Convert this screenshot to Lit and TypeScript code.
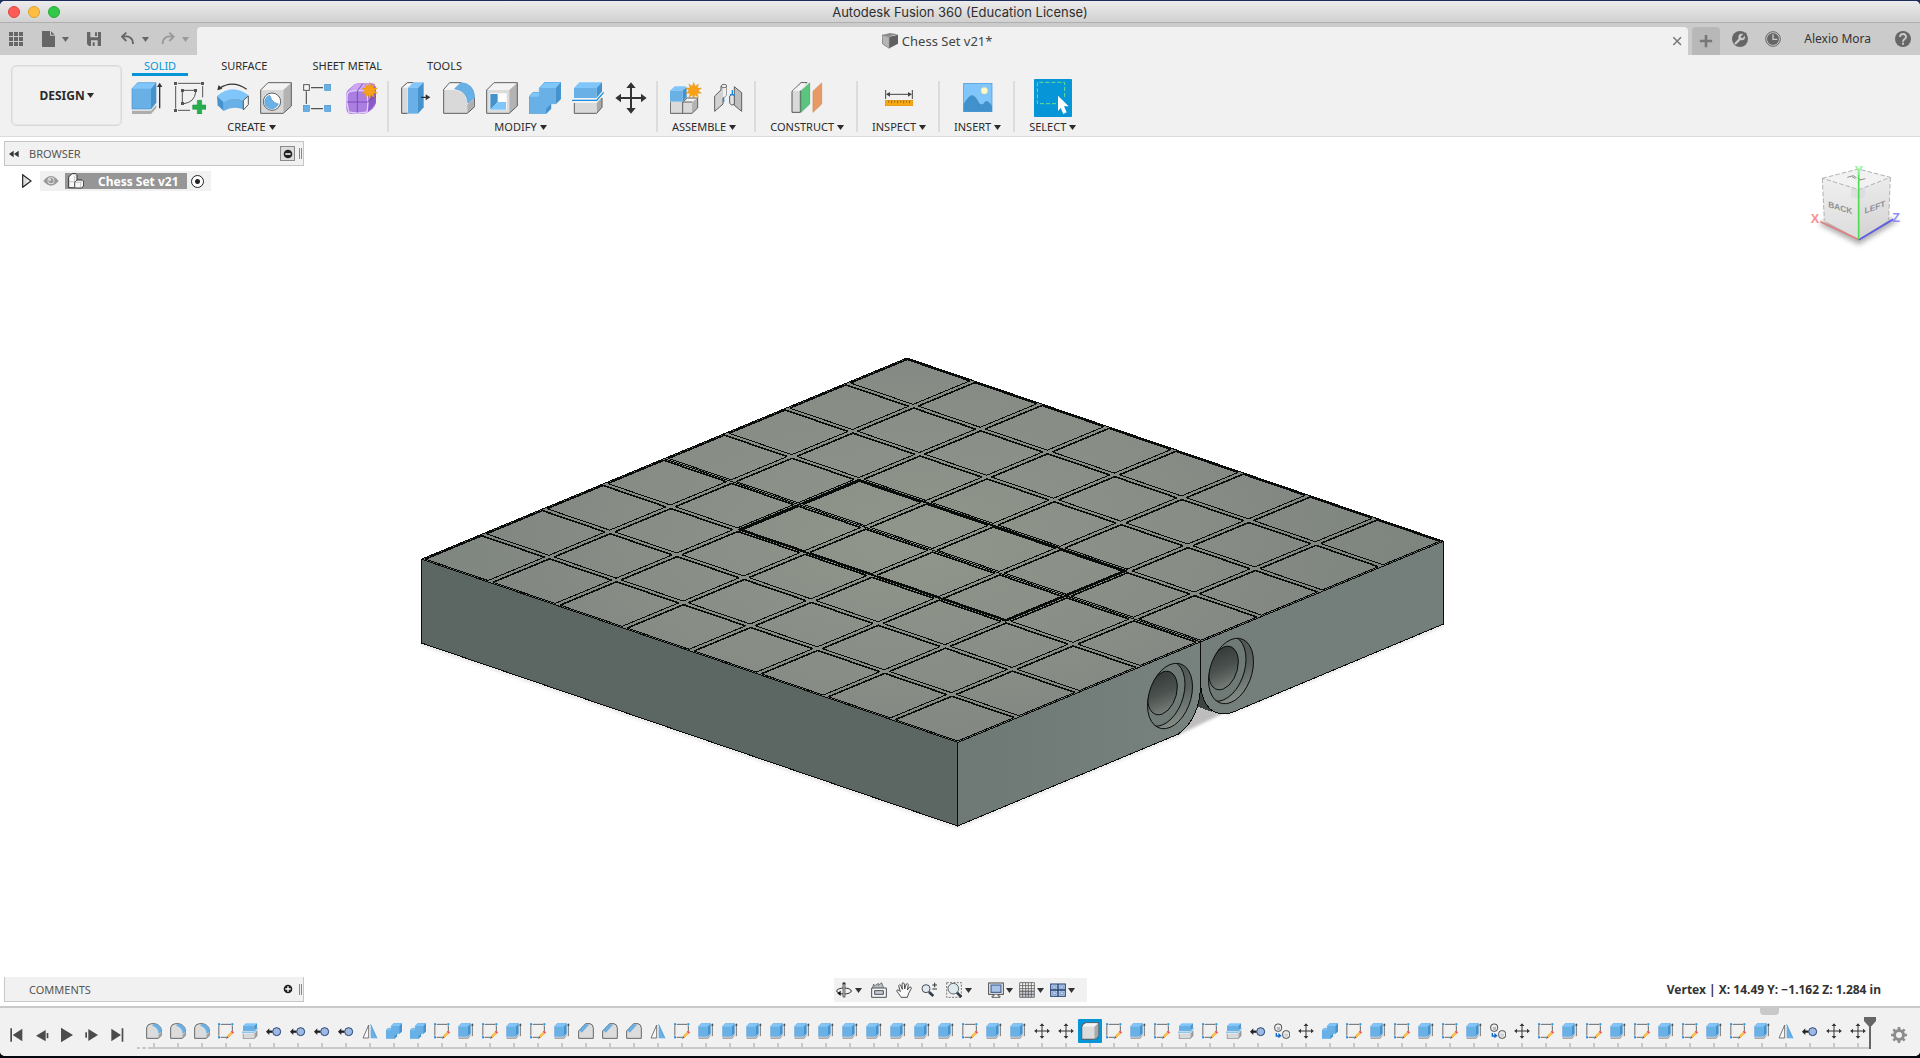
import { LitElement, html, svg, css, SVGTemplateResult } from "lit";
import { customElement, property, state } from "lit/decorators.js";
import { classMap } from "lit/directives/class-map.js";

const STAR = (cx: number, cy: number, r: number) => {
  const pts: string[] = [];
  for (let i = 0; i < 20; i++) {
    const rad = i % 2 ? r * 0.55 : r;
    const a = (i * Math.PI) / 10 - Math.PI / 2;
    pts.push(`${(cx + rad * Math.cos(a)).toFixed(1)},${(cy + rad * Math.sin(a)).toFixed(1)}`);
  }
  return svg`<polygon points=${pts.join(" ")} fill="#f7a11a" stroke="#e8920c" stroke-width="1"/>`;
};

/* Every glyph is drawn on a square grid; the first entry is the grid's side. */
const ICONS: Record<string, [number, SVGTemplateResult]> = {
  extrude: [96, svg`
    <polygon points="3,86 60,86 76,68 76,78 60,96 3,96" fill="#adadad"/>
    <polygon points="3,21 20,2 75,2 60,21" fill="#80c6fb"/>
    <rect x="3" y="20" width="57" height="61" fill="#68b0e6"/>
    <polygon points="60,20 75,2 75,62 60,81" fill="#4592cc"/>
    <path d="M3,20L20,2H75V62L60,81H3Z" fill="none" stroke="#4592cc" stroke-width="2"/>
    <path d="M86,12V79" stroke="#333" stroke-width="4"/><polygon points="78,15 94,15 86,2" fill="#333"/>`],
  sketchNew: [96, svg`
    <path d="M12,4H80M5,12V80M86,12V46M12,85H48" stroke="#555" stroke-width="3" fill="none"/>
    <path d="M0,0h9v9h-9zM81,0h9v9h-9zM0,81h9v9h-9zM21,21h9v9h-9zM60,21h9v9h-9zM21,60h9v9h-9z" fill="#555"/>
    <path d="M30,25H60M25,30V60M65,30Q62,60 30,65" stroke="#555" stroke-width="3" fill="none"/>
    <path d="M70,55h13v14h13v13h-13v14h-13v-14h-14v-13h14z" fill="#23b04c" stroke="#178a3a" stroke-width="1.5"/>`],
  revolve: [96, svg`
    <path d="M6,20Q46,-8 89,22" fill="none" stroke="#333" stroke-width="3.5"/><polygon points="1,25 5,9 16,20" fill="#333"/>
    <path d="M0,42Q46,2 95,40L79,55Q48,40 20,60Z" fill="#80c6fb"/>
    <path d="M20,60Q48,40 79,55V82Q48,70 20,87Z" fill="#68b0e6"/>
    <polygon points="0,42 20,60 20,87 2,70" fill="#4592cc"/>
    <polygon points="79,55 94,42 94,68 79,84" fill="#f4f4f4" stroke="#555" stroke-width="3"/>`],
  hole: [96, svg`
    <polygon points="2,24 24,2 94,2 70,24" fill="#f3f3f3"/><rect x="2" y="24" width="68" height="70" fill="#d8d8d8"/>
    <polygon points="70,24 94,2 94,72 70,94" fill="#b3b3b3"/>
    <path d="M2,24L24,2H94V72L70,94H2Z" fill="none" stroke="#5f5f5f" stroke-width="3"/>
    <circle cx="36" cy="59" r="26" fill="#fff" stroke="#5f5f5f" stroke-width="3"/>
    <path d="M27,39Q34,45 34,52Q42,64 56,66A22,22 0 1 1 27,39Z" fill="#68b0e6"/>
    <path d="M27,39Q34,45 34,52Q42,64 56,66" fill="none" stroke="#4592cc" stroke-width="2"/>`],
  pattern: [96, svg`
    <path d="M24,17H60M10,28V66M24,80H60" stroke="#555" stroke-width="3.5"/>
    <rect x="2" y="8" width="17" height="17" fill="#f8f8f8" stroke="#555" stroke-width="3"/>
    <g fill="#68b0e6" stroke="#4592cc" stroke-width="2"><rect x="65" y="7" width="18" height="18"/><rect x="1" y="70" width="18" height="18"/><rect x="65" y="70" width="18" height="18"/></g>`],
  form: [96, svg`
    <path d="M1,34Q2,26 10,20L24,8Q32,3 45,4H80Q91,8 90,30V64Q88,72 80,80L68,90Q60,96 45,96H14Q2,94 1,80Z" fill="#a97be0"/>
    <path d="M3,32Q10,24 24,9Q32,4 50,5H78Q74,16 62,26Q40,22 3,32Z" fill="#cda6f7"/>
    <path d="M64,30Q76,22 88,12Q92,40 89,62Q80,78 66,88Q70,60 64,30Z" fill="#8a5bc7"/>
    <path d="M4,36Q6,27 34,26T63,32Q68,60 63,90Q34,96 8,90Q1,60 4,36Z" fill="#ab7ee2" stroke="#e2cdfa" stroke-width="4"/>
    <path d="M34,27V92M3,60H65L90,42M34,27L50,5" stroke="#7440ab" stroke-width="2.5" fill="none"/>
    ${STAR(71, 26, 25)}`],
  pressPull: [96, svg`
    <path d="M5,17L22,2H40L24,17Z" fill="#f6f6f6"/><path d="M5,17H23V94H5Z" fill="#d9d9d9"/>
    <path d="M40,2H22L5,17V94H23" fill="none" stroke="#555" stroke-width="3"/>
    <polygon points="24,17 41,1 71,1 53,17" fill="#80c6fb"/><rect x="24" y="17" width="30" height="78" fill="#68b0e6"/>
    <polygon points="54,17 71,1 71,76 54,95" fill="#4592cc"/>
    <path d="M63,46H82" stroke="#333" stroke-width="4"/><polygon points="77,37 91,46 77,55" fill="#333"/>`],
  fillet: [96, svg`
    <path d="M2,23L20,2H54L36,20Z" fill="#f6f6f6"/>
    <path d="M2,24H34Q70,28 73,68V94H2Z" fill="#d9d9d9"/><polygon points="73,68 95,48 95,74 73,94" fill="#b0b0b0"/>
    <path d="M54,2H20L2,22V94H73L95,74V48" fill="none" stroke="#5f5f5f" stroke-width="3"/>
    <path d="M35,20L54,2Q92,4 95,46L75,64Q72,26 35,20Z" fill="#68b0e6" stroke="#4a9ad6" stroke-width="2"/>`],
  shell: [96, svg`
    <polygon points="2,24 24,2 94,2 70,24" fill="#f3f3f3"/><rect x="2" y="24" width="68" height="70" fill="#dcdcdc"/>
    <polygon points="70,24 94,2 94,72 70,94" fill="#b3b3b3"/>
    <path d="M2,24L24,2H94V72L70,94H2Z" fill="none" stroke="#5f5f5f" stroke-width="3"/>
    <rect x="11" y="34" width="51" height="50" fill="#fff"/>
    <polygon points="13,36 35,36 35,60 13,83" fill="#4592cc"/><polygon points="35,60 60,60 60,83 13,83" fill="#80c6fb"/>`],
  combine: [96, svg`
    <path d="M0,44L12,31H31V18L47,1H96V50L81,65H66V80L51,95H0Z" fill="#68b0e6"/>
    <path d="M31,18L47,1H96L81,18ZM0,44L12,31H31V40L27,44Z" fill="#80c6fb"/>
    <path d="M81,18L96,1V50L81,65ZM51,80L66,65V80L51,95Z" fill="#4592cc"/>
    <path d="M0,44L12,31H31V18L47,1H96V50L81,65H66V80L51,95H0Z" fill="none" stroke="#4f9ed8" stroke-width="1.5"/>`],
  split: [96, svg`
    <polygon points="6,18 22,1 90,1 76,18" fill="#80c6fb"/><rect x="6" y="18" width="68" height="30" fill="#68b0e6"/>
    <polygon points="74,18 90,1 90,28 74,48" fill="#4592cc"/>
    <path d="M0,55H74L95,31" fill="none" stroke="#1590e6" stroke-width="4"/>
    <rect x="7" y="63" width="66" height="31" fill="#d9d9d9"/><polygon points="74,63 90,46 90,76 74,94" fill="#a8a8a8"/>
    <path d="M7,63V94H74L90,76V48" fill="none" stroke="#5f5f5f" stroke-width="3"/>`],
  move: [96, svg`<path d="M45,16H51V45H78V35L95,48L78,61V51H51V78H62L48,95L34,78H45V51H18V61L1,48L18,35V45H45V18H34L48,1L62,18H45Z" fill="#333"/>`],
  component: [96, svg`
    <path d="M1,60H38V94H1ZM38,60H66V94H38Z" fill="#dadada"/><path d="M38,60L52,48H82L66,60Z" fill="#f5f5f5"/><path d="M66,60L83,48V78L66,94Z" fill="#b3b3b3"/>
    <path d="M1,60V94H66L83,78V48H52L38,60V94M38,60H66" fill="none" stroke="#5f5f5f" stroke-width="3"/>
    <polygon points="0,26 14,13 48,13 40,26" fill="#80c6fb"/><rect x="0" y="26" width="38" height="33" fill="#68b0e6"/><polygon points="38,26 50,14 50,46 38,59" fill="#4592cc"/>
    ${STAR(71, 26, 25)}`],
  joint: [96, svg`
    <path d="M5,42L24,24V12Q30,4 40,10V40L30,48V66L5,88Z" fill="#d2d2d2" stroke="#5f5f5f" stroke-width="3"/>
    <path d="M30,48V14Q34,8 40,10V40Z" fill="#efefef"/><ellipse cx="33" cy="12" rx="8" ry="5" fill="#f5f5f5" stroke="#5f5f5f" stroke-width="2.5"/>
    <path d="M64,14L86,32V88L64,70Z" fill="#bebebe" stroke="#5f5f5f" stroke-width="3"/>
    <path d="M50,42Q56,34 64,40V66Q56,74 50,64Z" fill="#e4e4e4" stroke="#5f5f5f" stroke-width="3"/>
    <path d="M32,46V60M58,24V38M51,38H66" stroke="#1590e6" stroke-width="4"/>`],
  construct: [96, svg`
    <path d="M3,28L30,2H48L28,24V91H3Z" fill="#d9d9d9" stroke="#555" stroke-width="3"/><path d="M5,27L31,4H48L28,26Z" fill="#f5f5f5"/>
    <polygon points="30,28 56,3 56,66 30,91" fill="#5bc57f" stroke="#3da562" stroke-width="2"/>
    <polygon points="66,28 92,3 92,66 66,91" fill="#e79a66" stroke="#d8834a" stroke-width="2"/>`],
  inspect: [96, svg`
    <path d="M8,24V51M88,24V51M14,37H82" stroke="#444" stroke-width="3"/><path d="M9,37L21,30V44ZM87,37L75,30V44Z" fill="#444"/>
    <rect x="7" y="55" width="82" height="16" fill="#f9a90f" stroke="#e38f04" stroke-width="2"/>
    <path d="M17,56v6M26,56v8M35,56v6M44,56v8M53,56v6M62,56v8M71,56v6M80,56v8" stroke="#6b4a00" stroke-width="2"/>`],
  insert: [96, svg`
    <rect x="5" y="4" width="85" height="85" fill="#80c6fb" stroke="#3f93d2" stroke-width="2"/>
    <path d="M5,66Q20,40 30,40T52,64Q62,72 68,60Q76,50 90,72V89H5Z" fill="#4191cc"/><circle cx="67" cy="26" r="10" fill="#fdf8c6" stroke="#d6d78a"/>`],
  select: [114, svg`
    <rect width="114" height="114" rx="2" fill="#0696d7"/>
    <path d="M92,54V10H10V74H70" fill="none" stroke="#6fdc8c" stroke-width="3" stroke-dasharray="12 6"/>
    <path d="M72,50L104,82H90L98,100L88,105L80,87L72,96Z" fill="#fff"/>`],
  sketch: [48, svg`
    <path d="M8,4H39M2.5,8V38M43,8V24M8,43H24" stroke="#555" stroke-width="2.6" fill="none"/>
    <path d="M0,1h6v6h-6zM40,1h6v6h-6zM0,40h6v6h-6z" fill="#1590e6"/>
    <path d="M24,47L27,38L32,44Z" fill="#555"/><path d="M27,38L39,26L45,32L32,44Z" fill="#f8bc4c"/><path d="M38,26L42,23L48,28L45,32Z" fill="#f04856"/>`],
  filletSmall: [48, svg`
    <path d="M2,46V14Q4,3 16,2H26Q45,5 47,26V36L37,46Z" fill="#dcdcdc" stroke="#666" stroke-width="3"/>
    <path d="M37,46V36L47,26V36Z" fill="#a5a5a5"/><path d="M18,8L24,2Q45,4 47,26L38,32Q36,12 18,8Z" fill="#68b0e6"/>`],
  chamfer: [48, svg`
    <path d="M2,46V24L23,2H36Q46,4 46,16V46Z" fill="#dcdcdc" stroke="#666" stroke-width="3"/>
    <polygon points="4,22 20,5 32,5 12,28" fill="#68b0e6" stroke="#4592cc"/>`],
  jointOrigin: [48, svg`
    <path d="M8,26H20" stroke="#222" stroke-width="7"/><polygon points="0,26 10,16 10,36" fill="#222"/>
    <circle cx="32" cy="26" r="12" fill="#9db8e2" stroke="#2c4574" stroke-width="3"/>`],
  mirror: [48, svg`<polygon points="3,45 20,6 20,45" fill="#f6f6f6" stroke="#666" stroke-width="2.6"/><polygon points="26,4 45,46 26,46" fill="#68b0e6"/><path d="M26,4L45,46" stroke="#4592cc" stroke-width="2"/>`],
  copy: [48, svg`
    <rect x="2" y="3" width="21" height="22" rx="9" fill="#ececec" stroke="#333" stroke-width="2.6"/><rect x="9" y="12" width="9" height="9" fill="#bbb"/>
    <rect x="26" y="23" width="21" height="23" rx="9" fill="#ececec" stroke="#333" stroke-width="2.6"/><rect x="32" y="32" width="9" height="9" fill="#ccc"/>
    <path d="M7,30V39H14" fill="none" stroke="#0c66c9" stroke-width="4"/><polygon points="13,30 23,38 13,46" fill="#0c66c9"/>`],
  body: [48, svg`<path d="M2,14Q3,3 14,2H46V36Q44,46 34,46H2Z" fill="#dcdcdc" stroke="#555" stroke-width="2.6"/><path d="M36,12L46,3V36L36,46Z" fill="#a9a9a9"/><path d="M4,12L13,3H45L36,12Z" fill="#f5f5f5"/>`],
  grid: [48, svg`<path d="M3,3h12v12h-12zM18,3h12v12h-12zM33,3h12v12h-12zM3,18h12v12h-12zM18,18h12v12h-12zM33,18h12v12h-12zM3,33h12v12h-12zM18,33h12v12h-12zM33,33h12v12h-12z" fill="#666"/>`],
  file: [48, svg`<path d="M0,0H24V14H39V48H0Z" fill="#666"/><path d="M27,1L38,11H27Z" fill="#666"/>`],
  save: [48, svg`<path d="M0,3H42V45H6L0,39Z" fill="#666"/><path d="M10,3H33V19H10ZM12,28H32V45H12Z" fill="#cbcbcb"/><path d="M24,4h6v11h-6zM17,34h6v11h-6z" fill="#666"/>`],
  undo: [48, svg`<path d="M16,5L3,17L16,30M5,17Q36,12 36,39" fill="none" stroke="#666" stroke-width="5.5"/>`],
  redo: [48, svg`<path d="M25,5L38,17L25,30M36,17Q5,12 5,39" fill="none" stroke="#999" stroke-width="5.5"/>`],
  document: [48, svg`<path d="M0,6L24,0L48,4L22,10Z" fill="#8a8a8a"/><path d="M0,6L22,11V46L2,33Z" fill="#b5b5b5" stroke="#6a6a6a" stroke-width="2"/><path d="M22,11L48,5V32L22,46Z" fill="#606060"/>`],
  close: [48, svg`<path d="M13,13L36,36M36,13L13,36" stroke="#777" stroke-width="4.5"/>`],
  plus: [48, svg`<path d="M24,3V45M3,24H45" stroke="#777" stroke-width="9"/>`],
  extensions: [48, svg`<circle cx="24" cy="24" r="24" fill="#666"/><path d="M9,39L25,23" stroke="#cbcbcb" stroke-width="7"/><circle cx="29" cy="18" r="10" fill="#cbcbcb"/><path d="M28,20L42,6" stroke="#666" stroke-width="7"/>`],
  jobs: [48, svg`<circle cx="24" cy="24" r="22" fill="#cbcbcb" stroke="#666" stroke-width="3"/><circle cx="24" cy="24" r="18" fill="#666"/><path d="M24,10V25H37" fill="none" stroke="#cbcbcb" stroke-width="4"/>`],
  help: [48, svg`<circle cx="24" cy="24" r="24" fill="#666"/><path d="M15,18Q15,9 24,9T33,18Q33,22 28,25Q24,28 24,32" fill="none" stroke="#cbcbcb" stroke-width="5.5"/><rect x="21" y="35" width="6" height="6" fill="#cbcbcb"/>`],
  collapse: [30, svg`<path d="M0,15L14,5V25ZM15,15L29,5V25Z" fill="#333"/>`],
  minus: [30, svg`<circle cx="15" cy="15" r="13" fill="#222"/><path d="M7,15H23" stroke="#fff" stroke-width="4"/>`],
  add: [30, svg`<circle cx="15" cy="15" r="13" fill="#222"/><path d="M7,15H23M15,7V23" stroke="#fff" stroke-width="4"/>`],
  expand: [42, svg`<path d="M8,2L33,21L8,40Z" fill="#f2f2f2"/><path d="M8,2L20,11V31L8,40Z" fill="#dcdcdc"/><path d="M8,2L33,21L8,40Z" fill="none" stroke="#222" stroke-width="3.5"/>`],
  eye: [48, svg`<path d="M1,24Q24,-6 47,24Q24,52 1,24Z" fill="#9b9b9b"/><circle cx="24" cy="23" r="10" fill="#f1f1f1"/><circle cx="24" cy="23" r="8" fill="#9b9b9b"/><circle cx="21" cy="20" r="3" fill="#f1f1f1"/>`],
  assembly: [48, svg`<path d="M2,44V12L12,2H24L27,6V21H42L47,25V39L40,45Z" fill="#f8f8f8" stroke="#333" stroke-width="3"/><path d="M20,10V44H38V28H20M38,28L45,22M3,26H20M20,10L27,4" fill="none" stroke="#aaa" stroke-width="2"/><path d="M20,44V28L27,21" fill="none" stroke="#333" stroke-width="2.5"/>`],
  first: [48, svg`<path d="M4,4h5v40h-5zM11,24L40,5V43Z" fill="#4c4c4c"/>`],
  stepBack: [48, svg`<path d="M6,26L35,9V43ZM38,18h5v16h-5z" fill="#4c4c4c"/>`],
  play: [48, svg`<path d="M6,2L42,24L6,46Z" fill="#4c4c4c"/>`],
  stepForward: [48, svg`<path d="M42,24L13,6V42ZM4,16h5v16h-5z" fill="#4c4c4c"/>`],
  last: [48, svg`<path d="M38,4h5v40h-5zM36,24L7,5V43Z" fill="#4c4c4c"/>`],
  orbit: [48, svg`<ellipse cx="24" cy="27" rx="22" ry="9" fill="none" stroke="#333" stroke-width="3"/><path d="M24,2V46" stroke="#333" stroke-width="8"/><path d="M24,4V44" stroke="#f1f1f1" stroke-width="3"/><path d="M18,7L24,0L30,7Z" fill="#333"/><path d="M4,34L14,26V42Z" fill="#111"/>`],
  lookAt: [48, svg`<path d="M4,18L8,6L10,12L22,4V10L32,2L38,18" fill="#b9bdc4" stroke="#4b4f57" stroke-width="2"/><path d="M2,18H46V46H2Z" fill="#f4f4f4" stroke="#4b4f57" stroke-width="3"/><path d="M11,26H37V37H11Z" fill="#c7cbd3" stroke="#4b4f57" stroke-width="3"/>`],
  hand: [48, svg`<path d="M14,44Q8,34 2,27Q3,21 9,25L13,29L8,11Q10,6 14,10L19,22L18,5Q21,0 25,5L26,21L31,6Q35,3 37,8L34,24L41,15Q46,14 46,19L37,36Q36,42 34,46H15Z" fill="#fbfbfb" stroke="#444" stroke-width="2.8"/>`],
  zoom: [48, svg`<circle cx="15" cy="20" r="12" fill="#dfe9ef" stroke="#4b5056" stroke-width="3"/><path d="M24,30L37,42" stroke="#333b48" stroke-width="8"/><path d="M34,9H48M41,2V16M34,21H48" stroke="#333" stroke-width="3"/>`],
  zoomWindow: [48, svg`<path d="M2,2H46V46H2Z" fill="none" stroke="#777" stroke-width="3" stroke-dasharray="6 4"/><circle cx="22" cy="20" r="16" fill="#dde9ea" stroke="#566" stroke-width="3"/><path d="M33,32L46,45" stroke="#333b48" stroke-width="8"/>`],
  display: [48, svg`<rect x="2" y="3" width="44" height="34" fill="#f4f4f4" stroke="#444" stroke-width="3"/><rect x="9" y="9" width="30" height="22" fill="#a9c2e8" stroke="#2e5088" stroke-width="3"/><path d="M18,38V42H12V46H36V42H30V38" fill="#fff" stroke="#444" stroke-width="2.5"/>`],
  gridSnap: [48, svg`<rect x="2" y="2" width="44" height="44" fill="#f8f8f8"/><path d="M2,24H46V46H2Z" fill="#c9cdd6"/><path d="M2,2H46V46H2ZM11,2V46M20,2V46M28,2V46M37,2V46M2,11H46M2,20H46M2,28H46M2,37H46" fill="none" stroke="#555" stroke-width="2.4"/>`],
  viewports: [48, svg`<rect x="2" y="6" width="44" height="37" fill="#b7cbeb" stroke="#24406e" stroke-width="3"/><path d="M24,6V43M2,24H46" stroke="#24406e" stroke-width="4"/><path d="M8,12h10v7h-10zM30,12h10v7h-10zM8,30h10v7h-10zM30,30h10v7h-10z" fill="#d4e1f5" stroke="#5f82b8" stroke-width="2"/>`],
  marker: [36, svg`<path d="M0,0H36V12L22,28H14L0,12Z" fill="#666"/>`],
  gear: [48, svg`<g fill="#8c8c8c"><path d="M20,0h8v48h-8zM0,20h48v8h-48z"/><path d="M20,0h8v48h-8zM0,20h48v8h-48z" transform="rotate(45 24 24)"/><circle cx="24" cy="24" r="18"/></g><circle cx="24" cy="24" r="9" fill="#f1f1f1"/>`],
};

const icon = (name: string, size = 16) => {
  const [box, art] = ICONS[name];
  return html`<svg width=${size} height=${size} viewBox="0 0 ${box} ${box}" aria-hidden="true">${art}</svg>`;
};
const caret = html`<svg class="caret" width="7" height="5" viewBox="0 0 7 5" aria-hidden="true"><path d="M0,0H7L3.5,5Z" fill="currentColor"/></svg>`;

const shared = css`
  button, select {
    font: inherit; color: inherit; background: none; border: 0; padding: 0; margin: 0;
    display: flex; align-items: center; cursor: pointer;
  }
  svg { display: block; flex: none; }
`;

/* Board corners and the two cell steps of the orthographic view. */
const TOP = [907, 358];
const U = [67.06, 22.9];
const V = [-60.69, 25.15];
const at = (u: number, v: number) =>
  `${(TOP[0] + u * U[0] + v * V[0]).toFixed(2)},${(TOP[1] + u * U[1] + v * V[1]).toFixed(2)}`;

@customElement("board-scene")
class BoardScene extends LitElement {
  static styles = css`
    :host { display: block; }
    svg { display: block; width: 100%; height: 100%; }
    .ink { fill: none; stroke: #0b0d0c; stroke-width: 1; shape-rendering: crispEdges; }
    .wall { stroke-width: 1.6; }
    .face { shape-rendering: crispEdges; }
    .round { fill: none; stroke: #0b0d0c; stroke-width: 1; vector-effect: non-scaling-stroke; }
  `;

  private cells() {
    const out: SVGTemplateResult[] = [];
    for (let i = 0; i < 8; i++) {
      for (let j = 0; j < 8; j++) {
        const a = i === 0 ? 0.03 : 0.04, b = i === 7 ? 0.97 : 0.965;
        const c = j === 0 ? 0.03 : 0.04, d = j === 7 ? 0.97 : 0.965;
        const p = [at(i + a, j + c), at(i + b, j + c), at(i + b, j + d), at(i + a, j + d)];
        out.push(svg`<path class="ink" d="M${p[1]}L${p[2]}L${p[3]}"/><path class="ink wall" d="M${p[3]}L${p[0]}L${p[1]}"/>`);
      }
    }
    return out;
  }

  private seams() {
    const line = (u1: number, v1: number, u2: number, v2: number) => svg`<path class="ink" d="M${at(u1, v1)}L${at(u2, v2)}"/>`;
    return [
      line(0, 4, 8, 4),
      line(2, 3, 6, 3), line(2, 3.02, 6, 3.02),
      line(2, 5, 6, 5), line(2, 4.98, 6, 4.98),
      line(2, 3, 2, 5), line(2.015, 3, 2.015, 5),
      line(6, 3, 6, 5), line(5.985, 3, 5.985, 5),
    ];
  }

  private bore(id: string, cx: number, cy: number) {
    const rim = `matrix(22.5 -9.3 0 31.4 ${cx} ${cy})`;
    const floor = `matrix(22.5 -9.3 0 31.4 ${cx - 7.5} ${cy - 2.5})`;
    const inner = `matrix(14.8 -6.1 0 20.9 ${cx - 7.5} ${cy - 3})`;
    return svg`
      <clipPath id=${id}><circle r="1" transform=${rim} /></clipPath>
      <circle r="1" transform=${rim} fill="url(#rimShade)"/>
      <g clip-path="url(#${id})">
        <circle r="1" transform=${floor} fill="#6f7a76"/>
        <circle class="round" r="1" transform=${floor} />
        <circle r="1" transform=${inner} fill="url(#boreShade)"/>
        <circle class="round" r="1" transform=${inner} />
      </g>
      <circle class="round" r="1" transform=${rim} />`;
  }

  render() {
    return html`<svg viewBox="0 137 1920 869" role="img" aria-label="Chess board model">
      <defs>
        <radialGradient id="topShade" gradientUnits="userSpaceOnUse" cx="910" cy="540" r="540" gradientTransform="translate(0 270) scale(1 .5)">
          <stop offset="0" stop-color="#90968b"/><stop offset=".5" stop-color="#888d86"/><stop offset="1" stop-color="#7c847d"/>
        </radialGradient>
        <linearGradient id="rightShade"><stop offset="0" stop-color="#6e7875"/><stop offset="1" stop-color="#77817d"/></linearGradient>
        <linearGradient id="rimShade" x1="0" y1="0" x2="0" y2="1"><stop offset="0" stop-color="#4e5553"/><stop offset=".5" stop-color="#5a625f"/><stop offset="1" stop-color="#858c86"/></linearGradient>
        <linearGradient id="boreShade" x1="0" y1="0" x2="0" y2="1"><stop offset="0" stop-color="#353b39"/><stop offset=".5" stop-color="#4a514e"/><stop offset="1" stop-color="#777e78"/></linearGradient>
        <filter id="soft" x="-20%" y="-20%" width="140%" height="140%"><feGaussianBlur stdDeviation="1.5"/></filter>
      </defs>
      <path d="M1190,704L1226,712L1172,738Z" fill="#bdbdbd" filter="url(#soft)"/>
      <path d="M421.5,644L957.5,827L1178,735M1226,715L1443.5,625" fill="none" stroke="#e2e2e2" stroke-width="3" filter="url(#soft)"/>
      <polygon class="face" points="1201,680 1196,706 1212,712" fill="#3d4341"/>
      <polygon class="face" points="421.5,559.5 957.5,742 957.5,826 421.5,643" fill="#5c6662"/>
      <path class="face" d="M957.5,742L1200.5,641V685Q1200,718 1178.5,734L957.5,826Z" fill="url(#rightShade)"/>
      <path class="face" d="M1200.5,641L1443.5,541V624L1238,710Q1222,718 1210,709Q1202,701 1200.5,685Z" fill="#747e7a"/>
      <polygon class="face" points="${at(0, 0)} ${at(8, 0)} ${at(8, 8)} ${at(0, 8)}" fill="url(#topShade)"/>
      <path class="ink" d="M421.5,559.5V643L957.5,826V742M957.5,826L1178.5,734Q1200,718 1200.5,685V641M1200.5,685Q1202,701 1210,709Q1222,718 1238,710L1443.5,624V541"/>
      <polygon class="ink" points="${at(0, 0)} ${at(8, 0)} ${at(8, 8)} ${at(0, 8)}"/>
      ${this.cells()}${this.seams()}
      ${this.bore("boreLeft", 1170, 696)}${this.bore("boreRight", 1231, 671)}
    </svg>`;
  }
}

@customElement("view-cube")
class ViewCube extends LitElement {
  static styles = css`
    :host { display: block; }
    svg { display: block; }
    .label { font: bold 25px "Liberation Sans", sans-serif; fill: #8d9094; text-anchor: middle; }
    .axis { font: bold 38px "Liberation Sans", sans-serif; text-anchor: middle; }
  `;
  render() {
    return html`<svg width="100" height="90" viewBox="501 480 300 270" role="img" aria-label="View cube">
      <defs>
        <linearGradient id="l" x2="0" y2="1"><stop offset="0" stop-color="#efefef"/><stop offset="1" stop-color="#dcdcdc"/></linearGradient>
        <linearGradient id="r" x2="0" y2="1"><stop offset="0" stop-color="#ececec"/><stop offset="1" stop-color="#d2d2d2"/></linearGradient>
        <filter id="b" x="-30%" y="-30%" width="160%" height="160%"><feGaussianBlur stdDeviation="8"/></filter>
      </defs>
      <path d="M535,672L657,734L775,664L700,640H600Z" fill="#8f8f8f" opacity=".7" filter="url(#b)"/>
      <polygon points="547,535 657,569 657,718 553,662" fill="url(#l)"/>
      <polygon points="657,569 751,532 746,660 657,718" fill="url(#r)"/>
      <polygon points="547,535 655,507 751,532 657,569" fill="#f2f2f2"/>
      <path d="M547,535L655,507L751,532L657,569ZM547,535L553,662M751,532L746,660" fill="none" stroke="#a5a5a5" stroke-width="2.5" stroke-dasharray="14 6"/>
      <path d="M633,562L657,569L675,561V590L657,598L633,590Z" fill="#d4d8dd" opacity=".6"/>
      <path d="M622,532L640,527L650,534M636,530L646,536M655,534L662,541M658,540L676,536" fill="none" stroke="#8d8f93" stroke-width="3"/>
      <text class="label" transform="translate(601 632) skewY(17)">BACK</text>
      <text class="label" transform="translate(705 630) skewY(-20)">LEFT</text>
      <path d="M541,665L657,719" stroke="#e08080" stroke-width="5"/>
      <path d="M657,719L760,658" stroke="#5b5be8" stroke-width="5"/>
      <path d="M656,516V718" stroke="#4fdc4f" stroke-width="5"/>
      <text class="axis" x="525" y="669" fill="#f98f8f">X</text>
      <text class="axis" x="656" y="525" fill="#8ff58f">Y</text>
      <text class="axis" x="768" y="665" fill="#8f8ff7">Z</text>
    </svg>`;
  }
}

interface Group { label: string; tools: [string, string][]; }
const GROUPS: Group[] = [
  { label: "CREATE", tools: [["extrude", "Extrude"], ["sketchNew", "Create Sketch"], ["revolve", "Revolve"], ["hole", "Hole"], ["pattern", "Rectangular Pattern"], ["form", "Create Form"]] },
  { label: "MODIFY", tools: [["pressPull", "Press Pull"], ["fillet", "Fillet"], ["shell", "Shell"], ["combine", "Combine"], ["split", "Split Body"], ["move", "Move"]] },
  { label: "ASSEMBLE", tools: [["component", "New Component"], ["joint", "Joint"]] },
  { label: "CONSTRUCT", tools: [["construct", "Offset Plane"]] },
  { label: "INSPECT", tools: [["inspect", "Measure"]] },
  { label: "INSERT", tools: [["insert", "Insert Image"]] },
  { label: "SELECT", tools: [["select", "Select"]] },
];

@customElement("tool-ribbon")
class ToolRibbon extends LitElement {
  @state() private tab = "SOLID";
  static styles = [shared, css`
    :host { display: flex; background: #f1f1f1; border-bottom: 1px solid #dcdcdc; padding-left: 11px; gap: 9px; color: #2b2b2b; font-size: 11px; }
    .workspace { display: flex; align-items: center; justify-content: center; gap: 1px; width: 111px; margin: 10px 0; box-sizing: border-box; border: 1px solid #d9d9d9; box-shadow: inset 0 0 0 1px #e6e6e6; border-radius: 5px; font-size: 12px; font-weight: 700; }
    .workspace select { appearance: none; outline: 0; }
    .tabs { display: flex; gap: 21px; padding: 4px 0 0 1px; }
    .tab { line-height: 14px; padding: 0 12px; border-bottom: 3px solid transparent; }
    .active { color: #0696d7; border-color: #0696d7; }
    .groups { display: flex; }
    .group { display: flex; flex-direction: column; align-items: center; padding: 3px 9px 1px 11px; }
    .group:first-child { padding-left: 0; }
    .divider { width: 2px; margin: 5px 0 4px; background: #dcdcdc; }
    .tools { display: flex; gap: 11px; height: 38px; align-items: center; }
    .menu { gap: 3px; line-height: 16px; margin-top: 2px; padding: 0 3px; }
    .several .menu { margin-right: 6px; }
  `];
  render() {
    return html`
      <label class="workspace"><select aria-label="Workspace"><option>DESIGN</option></select>${caret}</label>
      <div>
        <div class="tabs" role="tablist">
          ${["SOLID", "SURFACE", "SHEET METAL", "TOOLS"].map((t) => html`
            <button role="tab" aria-selected=${t === this.tab ? "true" : "false"} class=${classMap({ tab: true, active: t === this.tab })} @click=${() => (this.tab = t)}>${t}</button>`)}
        </div>
        <div class="groups">
          ${GROUPS.map((g, i) => html`
            ${i ? html`<div class="divider"></div>` : ""}
            <div class=${classMap({ group: true, several: g.tools.length > 1 })}>
              <div class="tools">${g.tools.map(([n, label]) => html`<button aria-label=${label}>${icon(n, n === "select" ? 38 : 32)}</button>`)}</div>
              <button class="menu">${g.label}${caret}</button>
            </div>`)}
        </div>
      </div>`;
  }
}

/* One letter per feature of the design history, oldest first. */
const CODES: Record<string, string> = { f: "filletSmall", s: "sketch", p: "split", j: "jointOrigin", m: "mirror", c: "combine", e: "extrude", h: "chamfer", v: "move", b: "body", y: "copy" };
const HISTORY = "fffspjjjjmccse" + "sesehhhms" + "e".repeat(11) + "seevvb" + "sespspjyvcsese" + "seyv" + "se".repeat(5) + "mjvv";

@customElement("history-bar")
class HistoryBar extends LitElement {
  @property() steps = "";
  @state() private selected = 39;
  static styles = [shared, css`
    :host { display: flex; position: relative; background: #f1f1f1; border-top: 2px solid #c9c9c9; padding: 11px 13px 7px 9px; }
    .playback { display: flex; gap: 9px; padding-top: 8px; align-items: flex-start; }
    .track { display: flex; list-style: none; margin: 0 0 0 12px; padding: 0 0 2px 5px; min-width: 0; overflow: hidden;
      background: linear-gradient(90deg, #c9c9c9 3px, transparent 3px 5px, #c9c9c9 5px 9px, transparent 9px 11px, #c9c9c9 11px) bottom / 100% 2px no-repeat; }
    .step { display: flex; flex-direction: column; align-items: center; flex: none; width: 24px; }
    .step::after { content: ""; width: 2px; height: 4px; background: #c9c9c9; }
    .step button { width: 24px; height: 24px; justify-content: center; border-radius: 1px; }
    .step .on { background: #0696d7; }
    .marker { flex: none; width: 12px; margin: -2px 0 0 -6px; display: flex; flex-direction: column; align-items: center; }
    .marker::after { content: ""; width: 2px; flex: 1; margin-top: -4px; background: #666; }
    .settings { margin-left: auto; padding-top: 8px; align-items: flex-start; }
    .thumb { position: absolute; top: 0; right: 141px; width: 19px; height: 7px; border-radius: 0 0 4px 4px; background: #c9c9c9; }
  `];
  render() {
    const controls: [string, string][] = [["first", "Go to start"], ["stepBack", "Step back"], ["play", "Play"], ["stepForward", "Step forward"], ["last", "Go to end"]];
    return html`
      <div class="playback">${controls.map(([n, l]) => html`<button aria-label=${l}>${icon(n)}</button>`)}</div>
      <ol class="track">
        ${[...this.steps].map((c, i) => html`<li class="step"><button class=${classMap({ on: i === this.selected })} aria-label="${CODES[c]} ${i + 1}" @click=${() => (this.selected = i)}>${icon(CODES[c], c === "b" ? 18 : 16)}</button></li>`)}
      </ol>
      <div class="marker">${icon("marker", 12)}</div>
      <button class="settings" aria-label="Settings">${icon("gear")}</button>
      <div class="thumb"></div>`;
  }
}

@customElement("app-root")
class AppRoot extends LitElement {
  static styles = [shared, css`
    :host { display: block; font-family: "Noto Sans", "Open Sans", sans-serif; font-size: 12px; color: #333; }
    .screen { box-sizing: border-box; min-height: 100vh; display: flex; padding: 1px 0 2px; background: linear-gradient(#1f2d5c 50%, #05090f 50%); }
    .window { flex: 1; min-width: 0; display: flex; flex-direction: column; border-radius: 5px; overflow: hidden; background: #fff; }
    .titlebar { display: grid; grid-template-columns: 1fr auto 1fr; align-items: center; height: 21px; border-bottom: 1px solid #b0b0b0; background: linear-gradient(#ececec, #d1d1d1); }
    .lights { display: flex; gap: 8px; padding-left: 8px; }
    .light { width: 12px; height: 12px; border-radius: 50%; box-sizing: border-box; }
    .red { background: #fc5b57; border: 1px solid #e2443f; }
    .amber { background: #fdbe41; border: 1px solid #e0a02c; }
    .green { background: #34c84a; border: 1px solid #24ab36; }
    .title { margin: 0; font: 400 13px/20px Inter, sans-serif; color: #2e2e2e; }
    .tabbar { display: flex; align-items: center; height: 32px; background: #cbcbcb; }
    .quick { display: flex; gap: 18px; padding: 0 8px; color: #666; }
    .drop { gap: 4px; }
    .history { display: flex; gap: 12px; }
    .history .drop { gap: 5px; }
    .dim { color: #999; }
    .doc { flex: 1; align-self: flex-end; height: 28px; display: flex; align-items: center; padding: 0 3px 0 8px; background: #f1f1f1; border-radius: 4px 4px 0 0; }
    .name { flex: 1; display: flex; justify-content: center; align-items: center; gap: 4px; font-size: 13px; color: #444; }
    .new { align-self: flex-end; width: 28px; height: 28px; margin: 0 12px 0 4px; justify-content: center; background: #b8b8b8; border-radius: 4px 4px 0 0; }
    .account { display: flex; align-items: center; gap: 17px; padding-right: 9px; }
    .user { padding: 0 7px 0 6px; line-height: 16px; }
    .viewport { flex: 1; position: relative; display: flex; flex-direction: column; justify-content: space-between; background: #fff; }
    .scene { position: absolute; inset: 0; }
    .upper, .lower { position: relative; }
    .upper { display: flex; justify-content: space-between; padding: 4px 13px 0 4px; }
    .cube { margin-top: 19px; }
    .panel { box-sizing: border-box; width: 300px; height: 25px; display: flex; align-items: center; padding: 0 1px 0 4px; background: #f1f1f1; border: 1px solid #c6c6c6; color: #555; }
    .panel h2 { margin: 0 auto 0 0; font-size: 11px; font-weight: 400; }
    .fold { width: 10px; margin-right: 10px; }
    .box { width: 15px; height: 15px; box-sizing: border-box; justify-content: center; margin-right: 4px; }
    .framed { border: 1px solid #8a8a8a; background: #dcdcdc; }
    .grip { width: 3px; height: 11px; box-sizing: border-box; border: solid #888; border-width: 0 1px; }
    .tree { display: flex; align-items: center; height: 20px; margin: 5px 0 0 16px; }
    .node { display: flex; align-items: center; height: 20px; margin-left: 6px; padding: 0 7px 0 3px; background: #f1f1f1; }
    .pick { display: flex; align-items: center; height: 16px; box-sizing: border-box; margin: 0 4px 0 6px; padding: 0 8px 0 3px; gap: 14px; background: #969696; color: #fff; font-weight: 700; }
    .radio { appearance: none; width: 13px; height: 13px; margin: 0; border: 1px solid #222; border-radius: 50%; background: radial-gradient(circle, #222 2px, transparent 3px) #fff; }
    .lower { display: grid; grid-template-columns: 1fr auto 1fr; align-items: end; padding: 0 4px 4px; }
    .comments { border-top: 0; }
    .comments h2 { margin-left: 20px; }
    .nav { display: flex; align-items: center; height: 24px; gap: 16px; padding: 0 12px 0 2px; background: #f1f1f1; }
    .views { display: flex; gap: 9px; }
    .views .drop { gap: 3px; }
    .modes { display: flex; gap: 6px; }
    .modes .drop { gap: 2px; }
    .status { margin: 0 35px 0 0; justify-self: end; font-weight: 700; line-height: 24px; }
  `];

  render() {
    return html`<div class="screen"><div class="window">
      <header class="titlebar">
        <div class="lights"><button class="light red" aria-label="Close window"></button><button class="light amber" aria-label="Minimize"></button><button class="light green" aria-label="Zoom window"></button></div>
        <h1 class="title">Autodesk Fusion 360 (Education License)</h1>
      </header>
      <div class="tabbar">
        <div class="quick">
          <button aria-label="Data panel">${icon("grid")}</button>
          <button class="drop" aria-label="File">${icon("file")}${caret}</button>
          <button aria-label="Save">${icon("save")}</button>
          <div class="history">
            <button class="drop" aria-label="Undo">${icon("undo")}${caret}</button>
            <button class="drop dim" aria-label="Redo">${icon("redo")}${caret}</button>
          </div>
        </div>
        <div class="doc"><div class="name">${icon("document")}<span>Chess Set v21*</span></div><button aria-label="Close document">${icon("close")}</button></div>
        <button class="new" aria-label="New design">${icon("plus", 14)}</button>
        <div class="account">
          <button aria-label="Extensions">${icon("extensions")}</button>
          <button aria-label="Job status">${icon("jobs")}</button>
          <button class="user">Alexio Mora</button>
          <button aria-label="Help">${icon("help")}</button>
        </div>
      </div>
      <tool-ribbon></tool-ribbon>
      <main class="viewport">
        <board-scene class="scene"></board-scene>
        <div class="upper">
          <section>
            <div class="panel"><button class="fold" aria-label="Collapse browser">${icon("collapse", 10)}</button><h2>BROWSER</h2><button class="box framed" aria-label="Hide all">${icon("minus", 10)}</button><span class="grip"></span></div>
            <div class="tree">
              <button aria-label="Expand">${icon("expand", 14)}</button>
              <div class="node"><button aria-label="Toggle visibility">${icon("eye")}</button><button class="pick">${icon("assembly")}Chess Set v21</button><input class="radio" type="radio" name="active" aria-label="Activate Chess Set v21" checked></div>
            </div>
          </section>
          <view-cube class="cube"></view-cube>
        </div>
        <div class="lower">
          <section class="panel comments"><h2>COMMENTS</h2><button class="box" aria-label="Add comment">${icon("add", 10)}</button><span class="grip"></span></section>
          <nav class="nav">
            <div class="views">
              <button class="drop" aria-label="Orbit">${icon("orbit")}${caret}</button>
              <button aria-label="Look at">${icon("lookAt")}</button>
              <button aria-label="Pan">${icon("hand")}</button>
              <button aria-label="Zoom">${icon("zoom")}</button>
              <button class="drop" aria-label="Zoom window">${icon("zoomWindow")}${caret}</button>
            </div>
            <div class="modes">
              <button class="drop" aria-label="Display settings">${icon("display")}${caret}</button>
              <button class="drop" aria-label="Grid and snaps">${icon("gridSnap")}${caret}</button>
              <button class="drop" aria-label="Viewports">${icon("viewports")}${caret}</button>
            </div>
          </nav>
          <p class="status">Vertex | X: 14.49 Y: −1.162 Z: 1.284 in</p>
        </div>
      </main>
      <history-bar steps=${HISTORY}></history-bar>
    </div></div>`;
  }
}
